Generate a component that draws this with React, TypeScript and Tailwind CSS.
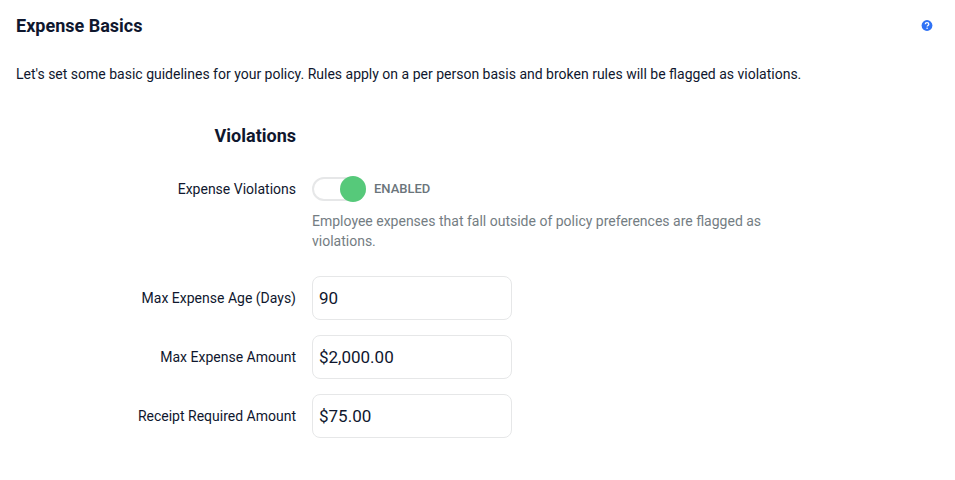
import React, { useState } from 'react';

const fields = [
  { id: 'max-age', label: 'Max Expense Age (Days)', value: '90' },
  { id: 'max-amount', label: 'Max Expense Amount', value: '$2,000.00' },
  { id: 'receipt-amount', label: 'Receipt Required Amount', value: '$75.00' },
];

export default function App() {
  const [enabled, setEnabled] = useState(true);

  return (
    <main className="bg-white px-4 pt-4 pb-10 font-['Roboto',sans-serif] text-sm leading-5 text-[#0f172e]">
      <header className="flex items-center justify-between pr-1.5">
        <h1 className="text-lg leading-5 font-bold">Expense Basics</h1>
        <button type="button" aria-label="Help">
          <svg width="12" height="12" viewBox="0 0 12 12" className="block">
            <circle cx="6" cy="5.5" r="5.4" fill="#2f72f5" />
            <path d="M4.2 4.3c.1-1 .8-1.6 1.8-1.6s1.8.6 1.8 1.5c0 1.2-1.6 1.2-1.6 2.2" fill="none" stroke="#fff" strokeWidth="1.3" />
            <circle cx="6.1" cy="8.2" r=".8" fill="#fff" />
          </svg>
        </button>
      </header>

      <p className="mt-7">
        Let's set some basic guidelines for your policy. Rules apply on a per person basis and broken rules will be flagged as violations.
      </p>

      <form className="mt-10 flex flex-col gap-[15px]">
        <h2 className="w-[280px] text-right text-lg leading-6 font-bold">Violations</h2>

        <div className="mt-3 mb-2.5 flex items-start gap-4">
          <label htmlFor="violations" className="w-[280px] shrink-0 pt-1 text-right">Expense Violations</label>
          <div className="max-w-[464px] pt-0.5">
            <label className="flex items-center gap-2">
              <input id="violations" type="checkbox" className="peer sr-only" checked={enabled} onChange={(e) => setEnabled(e.target.checked)} />
              <span className="flex h-6 w-[54px] items-center justify-start rounded-full border-2 border-[#e6e7e8] peer-checked:justify-end">
                <span className="-mx-0.5 size-[26px] shrink-0 rounded-full bg-[#56c97a]" />
              </span>
              <span className="text-[13px] font-medium text-[#6b757b]">{enabled ? 'ENABLED' : 'DISABLED'}</span>
            </label>
            <p className="mt-2.5 text-[#747d83]">Employee expenses that fall outside of policy preferences are flagged as violations.</p>
          </div>
        </div>

        {fields.map((field) => (
          <div key={field.id} className="flex items-center gap-4">
            <label htmlFor={field.id} className="w-[280px] shrink-0 text-right">{field.label}</label>
            <input id={field.id} type="text" defaultValue={field.value} className="h-11 w-[200px] rounded-lg border border-[#e6e7e8] px-1.5 text-[17px]" />
          </div>
        ))}
      </form>
    </main>
  );
}
